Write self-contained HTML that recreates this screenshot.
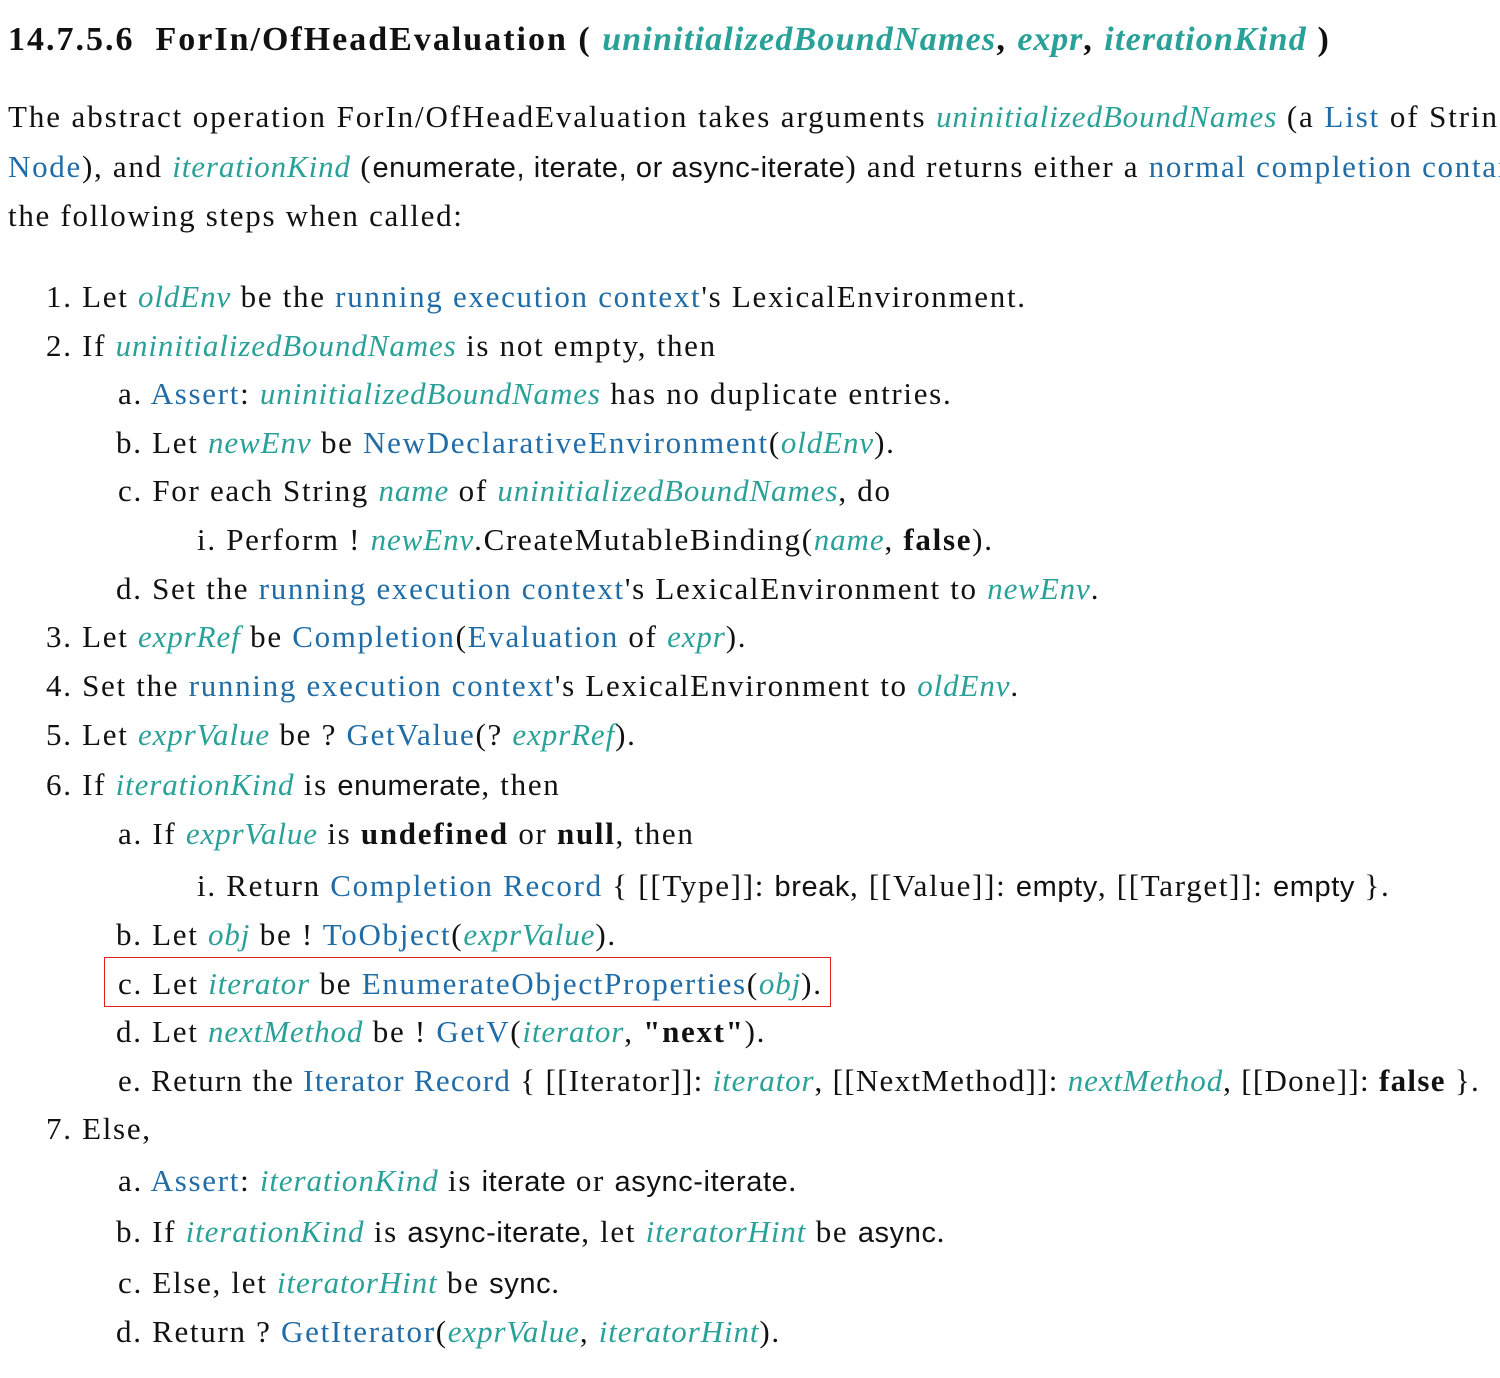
<!DOCTYPE html>
<html><head><meta charset="utf-8"><style>
html,body{margin:0;padding:0;background:#fff;width:1500px;height:1378px;overflow:hidden}
body{position:relative;font-family:"Liberation Serif","DejaVu Serif",serif;color:#111;font-size:31px;letter-spacing:1.7px}
.l{position:absolute;white-space:nowrap;line-height:40px;height:40px}
.v{color:#2aa198;font-style:italic;letter-spacing:0.9px}
.a{color:#206ca7}
.s{font-family:"Liberation Sans",sans-serif;font-size:29px;letter-spacing:0.6px}
b{font-weight:bold}
.box{position:absolute;left:104px;top:957px;width:727px;height:50px;border:1.5px solid #e0201a;box-sizing:border-box}
</style></head><body>
<div class="l" style="left:8px;top:20px;font-size:34px;font-weight:bold;letter-spacing:2px">14.7.5.6&nbsp; ForIn/OfHeadEvaluation ( <span class="v" style="letter-spacing:1.2px">uninitializedBoundNames</span>, <span class="v">expr</span>, <span class="v" style="letter-spacing:1.2px">iterationKind</span> )</div>
<div class="l" style="left:8px;top:97px;letter-spacing:1.9px">The abstract operation ForIn/OfHeadEvaluation takes arguments <span class="v">uninitializedBoundNames</span> (a <span class="a">List</span> of Strings),</div>
<div class="l" style="left:8px;top:147px"><span class="a">Node</span>), and <span class="v">iterationKind</span> (<span class="s">enumerate, iterate, or async-iterate</span>) and returns either a <span class="a">normal completion containing</span></div>
<div class="l" style="left:8px;top:196px">the following steps when called:</div>

<div class="l" style="left:46px;top:277px">1. Let <span class="v">oldEnv</span> be the <span class="a">running execution context</span>'s LexicalEnvironment.</div>
<div class="l" style="left:46px;top:326px">2. If <span class="v">uninitializedBoundNames</span> is not empty, then</div>
<div class="l" style="left:118px;top:374px">a. <span class="a">Assert</span>: <span class="v">uninitializedBoundNames</span> has no duplicate entries.</div>
<div class="l" style="left:116px;top:423px">b. Let <span class="v">newEnv</span> be <span class="a">NewDeclarativeEnvironment</span>(<span class="v">oldEnv</span>).</div>
<div class="l" style="left:118px;top:471px">c. For each String <span class="v">name</span> of <span class="v">uninitializedBoundNames</span>, do</div>
<div class="l" style="left:197px;top:520px">i. Perform ! <span class="v">newEnv</span>.CreateMutableBinding(<span class="v">name</span>, <b>false</b>).</div>
<div class="l" style="left:116px;top:569px">d. Set the <span class="a">running execution context</span>'s LexicalEnvironment to <span class="v">newEnv</span>.</div>
<div class="l" style="left:46px;top:617px">3. Let <span class="v">exprRef</span> be <span class="a">Completion</span>(<span class="a">Evaluation</span> of <span class="v">expr</span>).</div>
<div class="l" style="left:46px;top:666px">4. Set the <span class="a">running execution context</span>'s LexicalEnvironment to <span class="v">oldEnv</span>.</div>
<div class="l" style="left:46px;top:715px">5. Let <span class="v">exprValue</span> be ? <span class="a">GetValue</span>(? <span class="v">exprRef</span>).</div>
<div class="l" style="left:46px;top:765px">6. If <span class="v">iterationKind</span> is <span class="s">enumerate</span>, then</div>
<div class="l" style="left:118px;top:814px">a. If <span class="v">exprValue</span> is <b>undefined</b> or <b>null</b>, then</div>
<div class="l" style="left:197px;top:866px">i. Return <span class="a">Completion Record</span> { [[Type]]: <span class="s">break</span>, [[Value]]: <span class="s">empty</span>, [[Target]]: <span class="s">empty</span> }.</div>
<div class="l" style="left:116px;top:915px">b. Let <span class="v">obj</span> be ! <span class="a">ToObject</span>(<span class="v">exprValue</span>).</div>
<div class="l" style="left:118px;top:964px">c. Let <span class="v">iterator</span> be <span class="a">EnumerateObjectProperties</span>(<span class="v">obj</span>).</div>
<div class="box"></div>
<div class="l" style="left:116px;top:1012px">d. Let <span class="v">nextMethod</span> be ! <span class="a">GetV</span>(<span class="v">iterator</span>, <b>"next"</b>).</div>
<div class="l" style="left:118px;top:1061px;letter-spacing:1.3px">e. Return the <span class="a">Iterator Record</span> { [[Iterator]]: <span class="v">iterator</span>, [[NextMethod]]: <span class="v">nextMethod</span>, [[Done]]: <b>false</b> }.</div>
<div class="l" style="left:46px;top:1109px">7. Else,</div>
<div class="l" style="left:118px;top:1161px">a. <span class="a">Assert</span>: <span class="v">iterationKind</span> is <span class="s">iterate</span> or <span class="s">async-iterate</span>.</div>
<div class="l" style="left:116px;top:1212px">b. If <span class="v">iterationKind</span> is <span class="s">async-iterate</span>, let <span class="v">iteratorHint</span> be <span class="s">async</span>.</div>
<div class="l" style="left:118px;top:1263px">c. Else, let <span class="v">iteratorHint</span> be <span class="s">sync</span>.</div>
<div class="l" style="left:116px;top:1312px">d. Return ? <span class="a">GetIterator</span>(<span class="v">exprValue</span>, <span class="v">iteratorHint</span>).</div>
</body></html>
